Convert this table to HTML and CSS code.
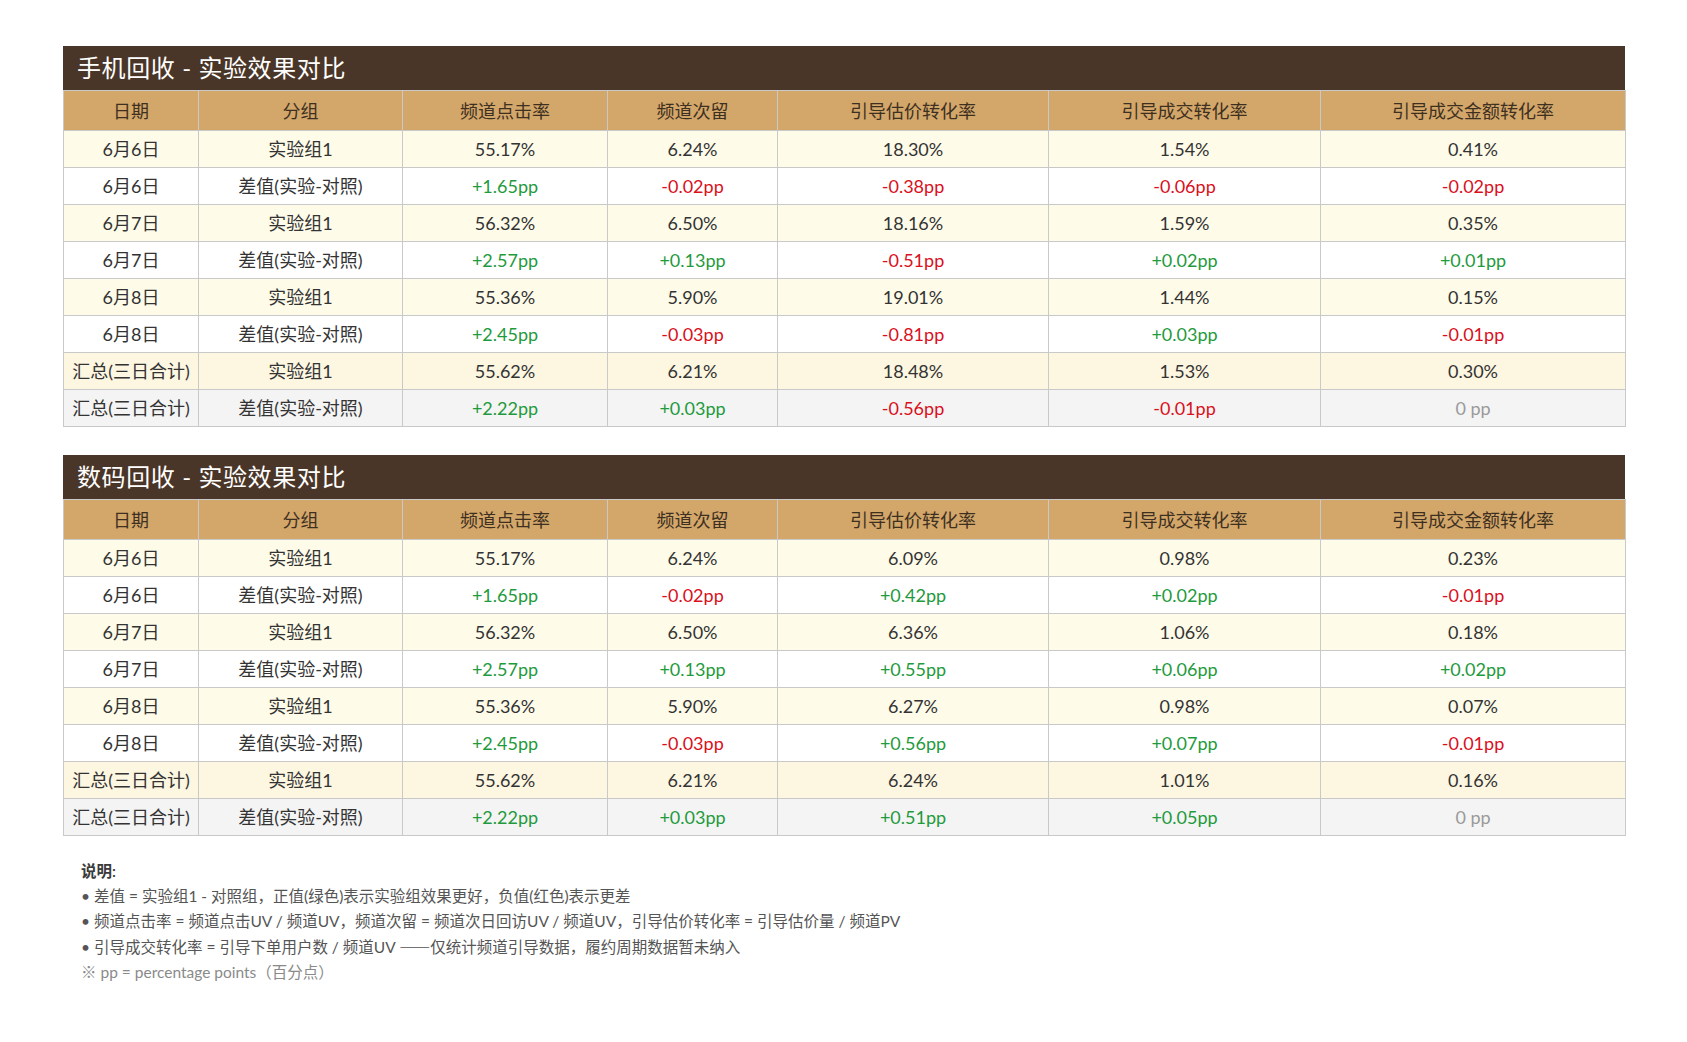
FILE: index.html
```html
<!DOCTYPE html>
<html lang="zh-CN">
<head>
<meta charset="utf-8">
<title>实验效果对比</title>
<link rel="stylesheet" href="styles.css">
</head>
<body>
<div class="page">
  <section class="block">
    <div class="title">手机回收 - 实验效果对比</div>
    <table class="grid">
      <colgroup>
        <col class="c1"><col class="c2"><col class="c3"><col class="c4"><col class="c5"><col class="c6"><col class="c7">
      </colgroup>
      <thead>
        <tr><th>日期</th><th>分组</th><th>频道点击率</th><th>频道次留</th><th>引导估价转化率</th><th>引导成交转化率</th><th>引导成交金额转化率</th></tr>
      </thead>
      <tbody>
        <tr class="exp"><td>6月6日</td><td>实验组1</td><td>55.17%</td><td>6.24%</td><td>18.30%</td><td>1.54%</td><td>0.41%</td></tr>
        <tr class="diff"><td>6月6日</td><td>差值(实验-对照)</td><td class="up">+1.65pp</td><td class="down">-0.02pp</td><td class="down">-0.38pp</td><td class="down">-0.06pp</td><td class="down">-0.02pp</td></tr>
        <tr class="exp"><td>6月7日</td><td>实验组1</td><td>56.32%</td><td>6.50%</td><td>18.16%</td><td>1.59%</td><td>0.35%</td></tr>
        <tr class="diff"><td>6月7日</td><td>差值(实验-对照)</td><td class="up">+2.57pp</td><td class="up">+0.13pp</td><td class="down">-0.51pp</td><td class="up">+0.02pp</td><td class="up">+0.01pp</td></tr>
        <tr class="exp"><td>6月8日</td><td>实验组1</td><td>55.36%</td><td>5.90%</td><td>19.01%</td><td>1.44%</td><td>0.15%</td></tr>
        <tr class="diff"><td>6月8日</td><td>差值(实验-对照)</td><td class="up">+2.45pp</td><td class="down">-0.03pp</td><td class="down">-0.81pp</td><td class="up">+0.03pp</td><td class="down">-0.01pp</td></tr>
        <tr class="sum-exp"><td>汇总(三日合计)</td><td>实验组1</td><td>55.62%</td><td>6.21%</td><td>18.48%</td><td>1.53%</td><td>0.30%</td></tr>
        <tr class="sum-diff"><td>汇总(三日合计)</td><td>差值(实验-对照)</td><td class="up">+2.22pp</td><td class="up">+0.03pp</td><td class="down">-0.56pp</td><td class="down">-0.01pp</td><td class="zero">0 pp</td></tr>
      </tbody>
    </table>
  </section>

  <section class="block">
    <div class="title">数码回收 - 实验效果对比</div>
    <table class="grid">
      <colgroup>
        <col class="c1"><col class="c2"><col class="c3"><col class="c4"><col class="c5"><col class="c6"><col class="c7">
      </colgroup>
      <thead>
        <tr><th>日期</th><th>分组</th><th>频道点击率</th><th>频道次留</th><th>引导估价转化率</th><th>引导成交转化率</th><th>引导成交金额转化率</th></tr>
      </thead>
      <tbody>
        <tr class="exp"><td>6月6日</td><td>实验组1</td><td>55.17%</td><td>6.24%</td><td>6.09%</td><td>0.98%</td><td>0.23%</td></tr>
        <tr class="diff"><td>6月6日</td><td>差值(实验-对照)</td><td class="up">+1.65pp</td><td class="down">-0.02pp</td><td class="up">+0.42pp</td><td class="up">+0.02pp</td><td class="down">-0.01pp</td></tr>
        <tr class="exp"><td>6月7日</td><td>实验组1</td><td>56.32%</td><td>6.50%</td><td>6.36%</td><td>1.06%</td><td>0.18%</td></tr>
        <tr class="diff"><td>6月7日</td><td>差值(实验-对照)</td><td class="up">+2.57pp</td><td class="up">+0.13pp</td><td class="up">+0.55pp</td><td class="up">+0.06pp</td><td class="up">+0.02pp</td></tr>
        <tr class="exp"><td>6月8日</td><td>实验组1</td><td>55.36%</td><td>5.90%</td><td>6.27%</td><td>0.98%</td><td>0.07%</td></tr>
        <tr class="diff"><td>6月8日</td><td>差值(实验-对照)</td><td class="up">+2.45pp</td><td class="down">-0.03pp</td><td class="up">+0.56pp</td><td class="up">+0.07pp</td><td class="down">-0.01pp</td></tr>
        <tr class="sum-exp"><td>汇总(三日合计)</td><td>实验组1</td><td>55.62%</td><td>6.21%</td><td>6.24%</td><td>1.01%</td><td>0.16%</td></tr>
        <tr class="sum-diff"><td>汇总(三日合计)</td><td>差值(实验-对照)</td><td class="up">+2.22pp</td><td class="up">+0.03pp</td><td class="up">+0.51pp</td><td class="up">+0.05pp</td><td class="zero">0 pp</td></tr>
      </tbody>
    </table>
  </section>

  <div class="notes">
    <div class="notes-head">说明:</div>
    <div class="note">• 差值 = 实验组1 - 对照组，正值(绿色)表示实验组效果更好，负值(红色)表示更差</div>
    <div class="note">• 频道点击率 = 频道点击UV / 频道UV，频道次留 = 频道次日回访UV / 频道UV，引导估价转化率 = 引导估价量 / 频道PV</div>
    <div class="note">• 引导成交转化率 = 引导下单用户数 / 频道UV <span class="dash">——</span>仅统计频道引导数据，履约周期数据暂未纳入</div>
    <div class="note light">※ pp = percentage points（百分点）</div>
  </div>
</div>
</body>
</html>
```

FILE: styles.css
```css
html, body {
  margin: 0;
  padding: 0;
  background: #ffffff;
}

body {
  font-family: Lato, "Noto Sans CJK SC", "Noto Sans", sans-serif;
  color: #333333;
}

.page {
  padding: 46px 0 0 63px;
  width: 1562px;
  display: flex;
  flex-direction: column;
  gap: 28px;
}

.block {
  display: flex;
  flex-direction: column;
}

.title {
  background: #4a3628;
  color: #ffffff;
  height: 44px;
  line-height: 44px;
  padding-left: 14px;
  font-size: 24px;
  letter-spacing: 0.6px;
}

.grid {
  width: 1562px;
  border-collapse: collapse;
  table-layout: fixed;
}

.c1 { width: 135px; }
.c2 { width: 204px; }
.c3 { width: 205px; }
.c4 { width: 170px; }
.c5 { width: 271px; }
.c6 { width: 272px; }
.c7 { width: 305px; }

.grid th,
.grid td {
  border: 1px solid #c9c9c9;
  text-align: center;
  padding: 0;
  white-space: nowrap;
  box-sizing: border-box;
}

.grid th {
  background: #d3a66a;
  color: #3e3020;
  font-weight: normal;
  font-size: 18px;
  height: 40px;
  padding-bottom: 2px;
}

.grid td {
  font-size: 18px;
  height: 37px;
  line-height: 20px;
  color: #333333;
}

.grid tr.exp td { background: #fefbe9; }
.grid tr.diff td { background: #ffffff; }
.grid tr.sum-exp td { background: #fdf6e1; }
.grid tr.sum-diff td { background: #f4f4f4; }

.grid td.up { color: #1f9a3d; }
.grid td.down { color: #d9101c; }
.grid td.zero { color: #9a9a9a; }

.notes {
  padding: 0 0 0 18px;
  margin-top: -5px;
  font-size: 15.5px;
  line-height: 25px;
  color: #555555;
}

.notes-head {
  color: #3a3a3a;
  font-weight: 600;
}

.dash {
  font-family: "Noto Sans CJK SC", sans-serif;
}

.note.light {
  color: #8a8a8a;
}
```
